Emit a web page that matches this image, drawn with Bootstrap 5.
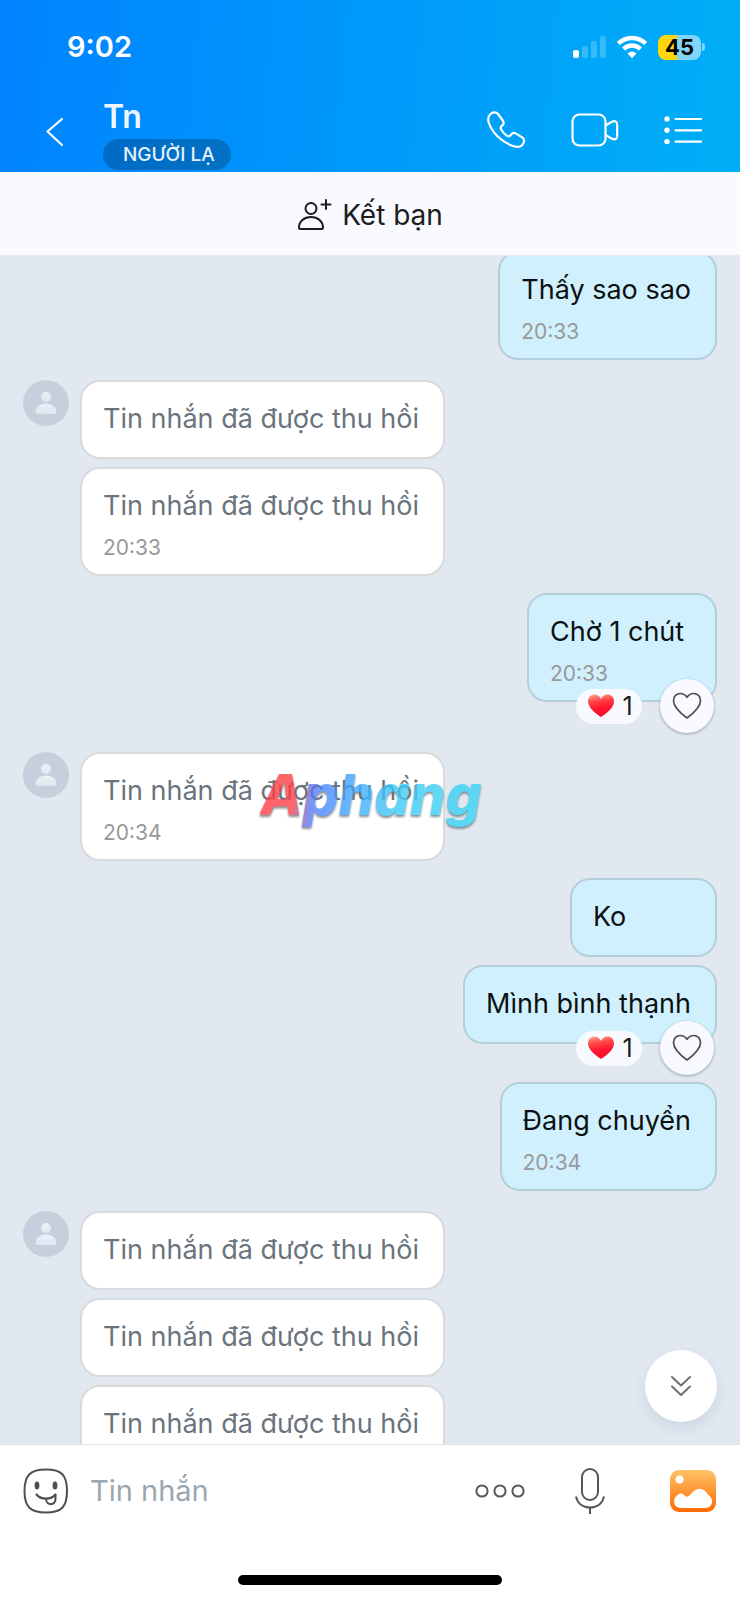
<!DOCTYPE html>
<html lang="vi">
<head>
<meta charset="utf-8">
<meta name="viewport" content="width=device-width, initial-scale=1">
<title>Tn</title>
<link href="https://cdn.jsdelivr.net/npm/bootstrap@5.3.0/dist/css/bootstrap.min.css" rel="stylesheet">
<style>
  body { font-family: Inter, "Noto Sans", sans-serif; font-size: 27px; line-height: 36px; color: #101214; background: #fff; }
  svg { display: block; flex: none; }
  .icon-btn { padding: 0; border: 0; background: none; line-height: 1; }
  .top-area { background: linear-gradient(95deg, #0083ff, #00aff6); color: #fff; height: 172px; padding: 0 37px 0 45px; }
  .status-row { height: 94px; padding-left: 22px; }
  .clock { font-size: 29px; font-weight: 600; }
  .battery { width: 43px; height: 25px; border-radius: 8px; background: linear-gradient(90deg, #ffd60a 45%, #80d5fb 45%); color: #000; font-size: 22px; line-height: 25px; font-weight: 700; }
  .battery-cap { width: 3px; height: 8px; margin: 0 -2px 0 1px; border-radius: 0 4px 4px 0; background: #80d5fb; }
  .title-row { height: 78px; }
  .contact-name { font-size: 32px; line-height: 46px; font-weight: 600; color: #eef6ff; margin: 0 0 -1px; }
  .stranger-tag { background: rgba(0, 0, 0, .22); border-radius: 16px; font-size: 19px; line-height: 31px; font-weight: 500; color: #e4f2ff; padding: 0 16px 0 20px; }
  .add-friend { height: 84px; background: #f9faff; color: #1b1d20; border: 0; border-bottom: 1px solid #e5e9ef; padding: 2px 0 0; font-size: 28px; }
  .chat-area { background: #e1e8f0; min-height: 0; }
  .thread { margin-top: -5px; padding: 0 23px; }
  .from-them { display: flex; gap: 11px; margin-top: 20px; }
  .from-me { margin-top: 17px; }
  .stack { display: flex; flex-direction: column; gap: 8px; }
  .bubble { position: relative; border: 2px solid #d9dadb; border-radius: 20px; background: #fff; padding: 19px 24px 20px 21px; color: #6b747d; white-space: nowrap; }
  .from-me .bubble { background: #d0f0fe; border-color: #b5cfda; color: #0d1012; }
  .bubble time { display: block; margin-top: 13px; font-size: 21px; line-height: 22px; color: #999; }
  .bubble:has(time) { padding-bottom: 15px; }
  .tiny { min-width: 147px; }
  .reacted { min-width: 190px; margin-bottom: 30px; }
  .reactions { position: absolute; right: 1px; bottom: -33px; gap: 18px; }
  .count-pill { width: 66px; height: 35px; border-radius: 18px; background: #f8faff; gap: 8px; font-size: 25px; color: #1b1d20; padding-left: 3px; }
  .heart-btn { width: 54px; height: 54px; border-radius: 50%; background: #f9faff; box-shadow: 0 1px 3px rgba(30, 50, 80, .4); }
  .brand-mark { position: absolute; left: 180px; top: 7px; font-size: 56px; line-height: 72px; font-weight: 800; font-style: italic; color: transparent; opacity: .8; background: linear-gradient(98deg, #ff4048 16%, #4f7dff 25%, #3fa9ff 42%, #3dcbf5 60%, #38d5f5); -webkit-background-clip: text; background-clip: text; padding-right: 6px; filter: drop-shadow(0 2px 1px #68757d); pointer-events: none; }
  .jump-btn { position: absolute; right: 23px; bottom: 22px; width: 72px; height: 72px; border-radius: 50%; background: #fff; box-shadow: 0 6px 14px rgba(60, 80, 120, .12); }
  .composer { border-top: 1px solid #dfe2e5; padding: 0 24px 0 23px; height: 92px; }
  .composer input { border: 0; outline: 0; padding: 0; min-width: 0; font-size: 29px; background: none; margin-left: 21px; }
  .composer input::placeholder { color: #9ba7b0; opacity: 1; }
  .composer-tools { gap: 48px; }
  .home-area { height: 64px; padding-bottom: 15px; }
  .home-bar { width: 264px; height: 10px; border-radius: 5px; background: #000; }
  .call-tools { gap: 45px; }
</style>
</head>
<body>
<svg width="0" height="0" class="position-absolute" aria-hidden="true">
  <defs>
    <linearGradient id="face" x1="0" y1="0" x2="0" y2="1"><stop stop-color="#e8f4f7"/><stop offset="1" stop-color="#dde7ee"/></linearGradient>
    <linearGradient id="red" x1=".3" y1="0" x2=".5" y2="1"><stop stop-color="#ff9a80"/><stop offset=".3" stop-color="#ff4347"/><stop offset=".6" stop-color="#ff1730"/><stop offset="1" stop-color="#f5102a"/></linearGradient>
    <linearGradient id="sun" x1="0" y1="0" x2="0" y2="1"><stop stop-color="#ffc368"/><stop offset="1" stop-color="#ff6a00"/></linearGradient>
    <symbol id="avatar" viewBox="0 0 46 46"><circle cx="23" cy="23" r="23" fill="#c8cfdc"/><circle cx="23" cy="17" r="5" fill="url(#face)"/><path d="M12.500 32.500C12.500 27 17 23.500 23 23.500s10.500 3.500 10.500 9q0 1.500-1.500 1.500H14q-1.500 0-1.500-1.500z" fill="url(#face)"/></symbol>
    <symbol id="red-heart" viewBox="0 0 26 24"><path d="M13 23C7 19 0 13.500 0 7.200C0 3 3 .5 6.500 .5C9.500 .5 12 2.300 13 5C14 2.300 16.500 .5 19.500 .5C23 .5 26 3 26 7.200C26 13.500 19 19 13 23z" fill="url(#red)"/></symbol>
    <symbol id="line-heart" viewBox="0 0 30 28"><path d="M15 26C9 21.500 1.500 15.500 1.500 8.700C1.500 4.300 4.500 1.500 8.300 1.500C11.500 1.500 13.500 3.200 15 5.300C16.500 3.200 18.500 1.500 21.700 1.500C25.500 1.500 28.500 4.300 28.500 8.700C28.500 15.500 21 21.500 15 26z" fill="none" stroke="#4d4d4f" stroke-width="1.700" stroke-linejoin="round"/></symbol>
  </defs>
</svg>

<div class="d-flex flex-column vh-100 overflow-hidden">
  <header class="top-area flex-shrink-0">
    <div class="status-row d-flex align-items-center justify-content-between">
      <span class="clock">9:02</span>
      <div class="d-flex align-items-center">
        <svg width="34" height="23" viewBox="0 0 34 23" class="me-2" fill="#fff"><rect x="1" y="14" width="6" height="8" rx="2"/><g opacity=".22"><rect x="10" y="10" width="6" height="12" rx="2"/><rect x="19" y="5" width="6" height="17" rx="2"/><rect x="28" y="0" width="6" height="22" rx="2"/></g></svg>
        <svg width="36" height="24" viewBox="-2 0 36 24" class="me-2"><g fill="none" stroke="#fff" stroke-width="4.400"><path d="M2.300 8.500C10 1.200 22 1.200 29.700 8.500"/><path d="M7.500 14C12.500 9.400 19.500 9.400 24.500 14"/></g><path d="M11.500 18.500q4.500-3.800 9 0L16 23.200z" fill="#fff"/></svg>
        <span class="battery text-center">45</span><span class="battery-cap"></span>
      </div>
    </div>
    <div class="title-row d-flex align-items-start">
      <button class="icon-btn mt-4" type="button" aria-label="Quay lại"><svg width="18" height="29" viewBox="0 0 18 29"><path d="M17 1L2.500 13.500L17 27" fill="none" stroke="#fff" stroke-width="2.200" stroke-linecap="round" stroke-linejoin="round"/></svg></button>
      <div class="ms-4 ps-3 flex-fill">
        <div class="d-inline-flex flex-column align-items-start">
          <h1 class="contact-name">Tn</h1>
          <span class="stranger-tag">NGƯỜI LẠ</span>
        </div>
      </div>
      <div class="call-tools d-flex align-items-center pt-3">
        <button class="icon-btn" type="button" aria-label="Gọi thoại"><svg width="40" height="40" viewBox="0 0 40 40"><path d="M4.500 4C6.500 2 10 1.500 12 4L17.200 11.200C18.200 13 17.600 14.500 16 15.800Q14 17 15 19Q18 24.500 22 26.200C23.500 26.800 24.300 25.800 25.200 24.500C26.500 22.700 28.500 22.800 30 23.600L36.200 27.400C38.400 28.900 38.500 31 37.300 33.400C35.500 36.800 31.500 37.500 27 36C15.500 32.200 6 22.500 2.700 12.500C1.700 9 2.300 6 4.500 4z" fill="none" stroke="#fff" stroke-width="2.200" stroke-linejoin="round"/></svg></button>
        <button class="icon-btn" type="button" aria-label="Gọi video"><svg width="48" height="35" viewBox="0 0 48 35" fill="none" stroke="#fff" stroke-width="2.200" stroke-linejoin="round"><rect x="1.500" y="1.500" width="33" height="31" rx="7"/><path d="M34.500 12.500L40.500 9Q46.200 6.500 46.200 12V22.500Q46.200 28 40.500 25.500L34.500 22"/></svg></button>
        <button class="icon-btn" type="button" aria-label="Tùy chọn"><svg width="39" height="31" viewBox="0 0 39 31"><g fill="#fff"><circle cx="3" cy="4" r="2.700"/><circle cx="3" cy="15.300" r="2.700"/><circle cx="3" cy="26.600" r="2.700"/></g><path d="M11.500 4H37M11.500 15.300H37M11.500 26.600H37" stroke="#fff" stroke-width="2.200" stroke-linecap="round"/></svg></button>
      </div>
    </div>
  </header>

  <button class="add-friend w-100 flex-shrink-0 d-flex align-items-center justify-content-center gap-2" type="button">
    <svg width="37" height="34" viewBox="0 0 37 34" fill="none" stroke="#1b1d20" stroke-width="2" stroke-linecap="round"><circle cx="14" cy="10.500" r="5.500"/><path d="M2 29.500C2 23.500 7 19 14 19s12 4.500 12 10.500q0 1.500-1.500 1.500H3.500Q2 31 2 29.500z"/><path d="M29 2V11M24.500 6.500H33.500"/></svg>
    <span>Kết bạn</span>
  </button>

  <main class="chat-area position-relative flex-fill overflow-hidden">
    <div class="thread">
      <div class="stack from-me align-items-end mt-0">
        <div class="bubble">Thấy sao sao<time>20:33</time></div>
      </div>
      <div class="from-them">
        <svg width="46" height="46"><use href="#avatar"/></svg>
        <div class="stack">
          <div class="bubble">Tin nhắn đã được thu hồi</div>
          <div class="bubble">Tin nhắn đã được thu hồi<time>20:33</time></div>
        </div>
      </div>
      <div class="stack from-me align-items-end">
        <div class="bubble reacted">Chờ 1 chút<time>20:33</time>
          <div class="reactions d-flex align-items-center">
            <span class="count-pill d-flex align-items-center justify-content-center"><svg width="26" height="24"><use href="#red-heart"/></svg>1</span>
            <button class="icon-btn heart-btn d-flex align-items-center justify-content-center" type="button" aria-label="Thả tim"><svg width="30" height="28"><use href="#line-heart"/></svg></button>
          </div>
        </div>
      </div>
      <div class="from-them">
        <svg width="46" height="46"><use href="#avatar"/></svg>
        <div class="stack position-relative">
          <div class="bubble">Tin nhắn đã được thu hồi<time>20:34</time></div>
          <span class="brand-mark">Aphang</span>
        </div>
      </div>
      <div class="stack from-me align-items-end">
        <div class="bubble tiny">Ko</div>
        <div class="bubble reacted">Mình bình thạnh
          <div class="reactions d-flex align-items-center">
            <span class="count-pill d-flex align-items-center justify-content-center"><svg width="26" height="24"><use href="#red-heart"/></svg>1</span>
            <button class="icon-btn heart-btn d-flex align-items-center justify-content-center" type="button" aria-label="Thả tim"><svg width="30" height="28"><use href="#line-heart"/></svg></button>
          </div>
        </div>
        <div class="bubble">Đang chuyển<time>20:34</time></div>
      </div>
      <div class="from-them">
        <svg width="46" height="46"><use href="#avatar"/></svg>
        <div class="stack">
          <div class="bubble">Tin nhắn đã được thu hồi</div>
          <div class="bubble">Tin nhắn đã được thu hồi</div>
          <div class="bubble">Tin nhắn đã được thu hồi</div>
        </div>
      </div>
    </div>
    <button class="icon-btn jump-btn d-flex align-items-center justify-content-center" type="button" aria-label="Xuống cuối"><svg width="22" height="22" viewBox="0 0 22 22"><path d="M2 2L11 10.500L20 2M2 11.500L11 20L20 11.500" fill="none" stroke="#707070" stroke-width="2" stroke-linecap="round" stroke-linejoin="round"/></svg></button>
  </main>

  <footer class="flex-shrink-0 bg-white">
    <form class="composer d-flex align-items-center">
      <button class="icon-btn" type="button" aria-label="Nhãn dán"><svg width="46" height="46" viewBox="0 0 46 46" fill="none" stroke="#4f4f50" stroke-width="2"><path d="M23 1.500C38.500 1.500 44 7 44 23S38.500 44.500 23 44.500S1.500 39 1.500 23S7.500 1.500 23 1.500z"/><g fill="#4f4f50" stroke="none"><ellipse cx="14" cy="17.500" rx="2.400" ry="3.900"/><ellipse cx="32" cy="17.500" rx="2.400" ry="3.900"/></g><path d="M13.500 26.500C18 32 28 32 32.500 26.500" stroke-width="2.200" stroke-linecap="round"/><path d="M23 30.500C23 38 33 38 32.500 30.500V27"/></svg></button>
      <input class="flex-fill" type="text" placeholder="Tin nhắn" aria-label="Tin nhắn">
      <div class="composer-tools d-flex align-items-center">
        <button class="icon-btn" type="button" aria-label="Thêm"><svg width="52" height="16" viewBox="0 0 52 16" fill="none" stroke="#58585a" stroke-width="2"><circle cx="8" cy="8" r="5.600"/><circle cx="26" cy="8" r="5.600"/><circle cx="44" cy="8" r="5.600"/></svg></button>
        <button class="icon-btn" type="button" aria-label="Ghi âm"><svg width="32" height="48" viewBox="0 0 32 48" fill="none" stroke="#58585a" stroke-width="2"><rect x="8" y="2" width="16" height="31" rx="8"/><path d="M2 29.500C3.500 36.500 9 40.500 16 40.500S28.500 36.500 30 29.500M16 40.500V47"/></svg></button>
        <button class="icon-btn ps-3" type="button" aria-label="Ảnh"><svg width="46" height="42" viewBox="0 0 46 42"><rect width="46" height="42" rx="9" fill="url(#sun)"/><circle cx="9.500" cy="9.500" r="4" fill="#fff"/><path d="M4 31C4 28 6 26 9 24Q11.500 22.300 14 25Q17 28.500 20.500 24.500C24 20.500 26 19 30 19C33.500 19 35.500 21 38 24.500L41 27.500Q43 31.500 41.500 34Q40 38 35 38H11Q4 38 4 31z" fill="#fff"/></svg></button>
      </div>
    </form>
    <div class="home-area d-flex align-items-end justify-content-center"><div class="home-bar"></div></div>
  </footer>
</div>
<script src="https://cdn.jsdelivr.net/npm/bootstrap@5.3.0/dist/js/bootstrap.bundle.min.js"></script>
</body>
</html>
